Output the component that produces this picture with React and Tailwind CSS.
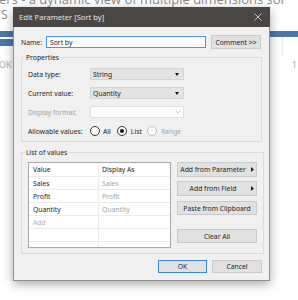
import React from "react";

function DownTri() {
  return (
    <svg width="4" height="3" viewBox="0 0 4 3" className="shrink-0">
      <path d="M0 0 L4 0 L2 3 Z" fill="#111" />
    </svg>
  );
}

function RightTri() {
  return (
    <svg width="3" height="5" viewBox="0 0 3 5" className="shrink-0">
      <path d="M0 0 L3 2.5 L0 5 Z" fill="#222" />
    </svg>
  );
}

function Radio({ checked, disabled }) {
  return (
    <span
      className={
        "w-[10px] h-[10px] rounded-full border bg-white flex items-center justify-center shrink-0 " +
        (disabled ? "border-[#bcbcbc]" : "border-[#333333]")
      }
    >
      {checked ? <span className="w-[4px] h-[4px] rounded-full bg-[#111]" /> : null}
    </span>
  );
}

function Btn({ children, arrow, className = "" }) {
  return (
    <div
      className={
        "flex items-center bg-[#e1e1e1] border border-[#cacaca] text-[#1e1e1e] " + className
      }
    >
      <span className="flex-1 text-center whitespace-nowrap">{children}</span>
      {arrow ? (
        <span className="w-[8px] flex justify-center">
          <RightTri />
        </span>
      ) : null}
    </div>
  );
}

const rows = [
  ["Sales", "Sales"],
  ["Profit", "Profit"],
  ["Quantity", "Quantity"],
];

export default function App() {
  return (
    <div className="relative w-[298px] h-[300px] overflow-hidden bg-white font-['Noto_Sans',sans-serif]">
      {/* background page */}
      <div className="flex flex-col">
        <div className="-mt-[8px] -ml-[1px] h-[15px] whitespace-nowrap text-[13px] leading-[15px] text-[#8a8a8a] font-['Open_Sans',sans-serif]">
          ers - a dynamic view of multiple dimensions sor
        </div>
        <div className="mt-[1px] h-[14px] pl-[1px] text-[12px] leading-[14px] text-[#8a8a8a] font-['Open_Sans',sans-serif]">
          S
        </div>
        <div className="mt-[9px] h-[6px] w-full bg-[#4a78ab]" />
        <div className="flex">
          <div className="mt-[2px] h-[7px] w-[14px] bg-[#4a78ab]" />
          <div className="flex-1" />
          <div className="w-[16px] h-[20px] border-l border-[#ececec]" />
        </div>
        <div className="mt-[2px] flex justify-between text-[9px] leading-[12px] text-[#b0b0b0]">
          <span className="-ml-[1px]">OK</span>
          <span className="mr-[1px]">1</span>
        </div>
      </div>

      {/* dialog window */}
      <div className="absolute left-[13px] top-[7px] w-[257px] flex flex-col shadow-[0_3px_10px_rgba(0,0,0,0.35)] text-[6.8px] leading-[9px] text-[#1e1e1e]">
        <div className="h-[20px] bg-[#4a4643] flex items-center justify-between pl-[6px] pr-[8px]">
          <span className="text-[7.6px] text-[#e4e4e4]">Edit Parameter [Sort by]</span>
          <svg width="8" height="8" viewBox="0 0 8 8">
            <path d="M0.5 0.5 L7.5 7.5 M7.5 0.5 L0.5 7.5" stroke="#d2d2d2" strokeWidth="0.9" />
          </svg>
        </div>
        <div className="bg-[#f0f0f0] border border-t-0 border-[#8f8f8f] px-[7px] pt-[8px] pb-[7px] flex flex-col">
          {/* name row */}
          <div className="flex items-center h-[14px]">
            <span className="w-[25px]">Name:</span>
            <div className="w-[160px] h-[12px] border border-[#4b96dc] bg-white flex items-center pl-[3px]">
              Sort by
            </div>
            <Btn className="ml-[5px] w-[50px] h-[14px]">Comment &gt;&gt;</Btn>
          </div>

          {/* properties */}
          <fieldset className="mt-[4px] border border-[#dcdcdc] pl-[6px] pr-[6px] pb-[4px]">
            <legend className="-ml-[3px] px-[1px] leading-[9px]">Properties</legend>
            <div className="mt-[6px] flex flex-col gap-[7px]">
              <div className="flex items-center h-[12px]">
                <span className="w-[62px]">Data type:</span>
                <div className="w-[94px] h-[12px] bg-[#e3e3e3] border border-[#d4d4d4] flex items-center justify-between pl-[2px] pr-[4px]">
                  <span>String</span>
                  <DownTri />
                </div>
              </div>
              <div className="flex items-center h-[12px]">
                <span className="w-[62px]">Current value:</span>
                <div className="w-[94px] h-[12px] bg-[#e3e3e3] border border-[#d4d4d4] flex items-center justify-between pl-[2px] pr-[4px]">
                  <span>Quantity</span>
                  <DownTri />
                </div>
              </div>
              <div className="flex items-center h-[12px]">
                <span className="w-[62px] text-[#a3a3a3]">Display format:</span>
                <div className="w-[94px] h-[12px] bg-white border border-[#e0e0e0] flex items-center justify-end pr-[2px]">
                  <svg width="6" height="4" viewBox="0 0 6 4">
                    <path d="M0.5 0.5 L3 3 L5.5 0.5" stroke="#b5b5b5" strokeWidth="0.8" fill="none" />
                  </svg>
                </div>
              </div>
              <div className="flex items-center h-[12px]">
                <span className="w-[62px]">Allowable values:</span>
                <Radio />
                <span className="ml-[3px]">All</span>
                <span className="ml-[6px]">
                  <Radio checked />
                </span>
                <span className="ml-[4px]">List</span>
                <span className="ml-[5px]">
                  <Radio disabled />
                </span>
                <span className="ml-[4px] text-[#a3a3a3]">Range</span>
              </div>
            </div>
          </fieldset>

          {/* list of values */}
          <fieldset className="mt-[6px] border border-[#dcdcdc] pl-[6px] pr-[6px] pb-[5px]">
            <legend className="-ml-[3px] px-[1px] leading-[9px]">List of values</legend>
            <div className="mt-[5px] flex">
              <div className="w-[143px] h-[86px] bg-white border border-[#a9a9a9] flex flex-col">
                <div className="grid grid-cols-[70px_1fr] h-[14px] border-b border-[#ececec]">
                  <div className="pl-[4px] border-r border-[#ececec] flex items-center">Value</div>
                  <div className="pl-[3px] flex items-center">Display As</div>
                </div>
                {rows.map(([a, b]) => (
                  <div key={a} className="grid grid-cols-[70px_1fr] h-[13px] border-b border-[#ececec]">
                    <div className="pl-[4px] border-r border-[#ececec] flex items-center">{a}</div>
                    <div className="pl-[3px] flex items-center text-[#a3a3a3]">{b}</div>
                  </div>
                ))}
                <div className="grid grid-cols-[70px_1fr] h-[13px] border-b border-[#ececec]">
                  <div className="pl-[4px] border-r border-[#ececec] flex items-center text-[#b0b0b0]">Add</div>
                  <div />
                </div>
                <div className="grid grid-cols-[70px_1fr] h-[13px] border-b border-[#ececec]">
                  <div className="border-r border-[#ececec]" />
                  <div />
                </div>
                <div className="grid grid-cols-[70px_1fr] flex-1">
                  <div className="border-r border-[#ececec]" />
                  <div />
                </div>
              </div>
              <div className="ml-[6px] w-[80px] flex flex-col">
                <Btn arrow className="h-[15px]">Add from Parameter</Btn>
                <Btn arrow className="mt-[4px] h-[15px]">Add from Field</Btn>
                <Btn className="mt-[5px] h-[14px]">Paste from Clipboard</Btn>
                <Btn className="mt-[14px] h-[14px]">Clear All</Btn>
              </div>
            </div>
          </fieldset>

          {/* footer */}
          <div className="mt-[6px] flex justify-end gap-[5px]">
            <div className="w-[49px] h-[13px] flex items-center justify-center bg-[#e1e1e1] border border-[#3a8ad6]">
              OK
            </div>
            <Btn className="w-[50px] h-[13px]">Cancel</Btn>
          </div>
        </div>
      </div>
    </div>
  );
}
